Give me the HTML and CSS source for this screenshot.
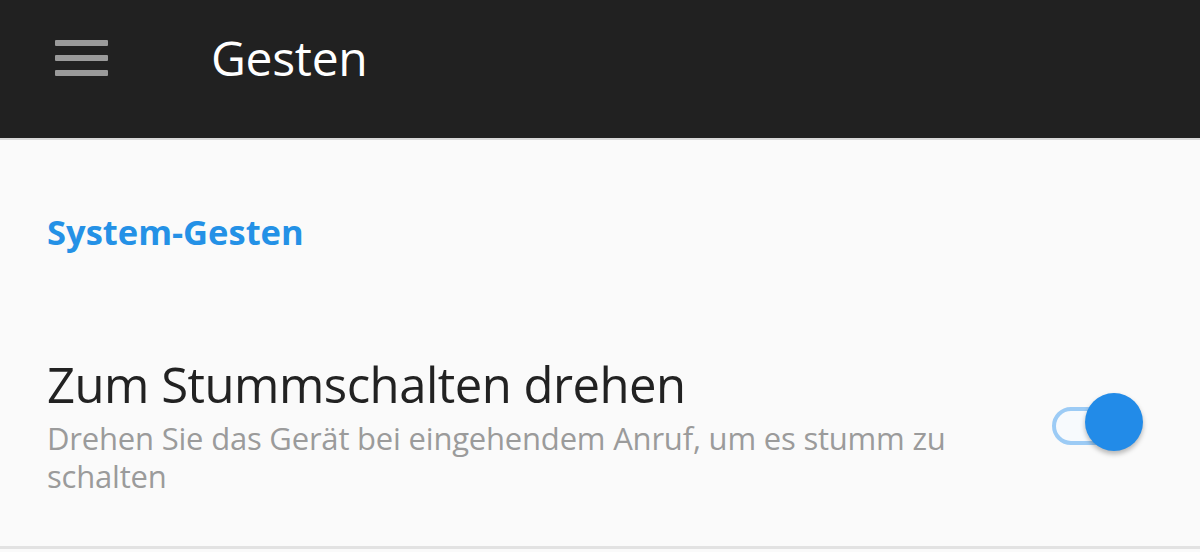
FILE: index.html
```html
<!DOCTYPE html>
<html lang="de">
<head>
<meta charset="utf-8">
<title>Gesten</title>
<link rel="stylesheet" href="styles.css">
</head>
<body>
<header class="appbar">
  <div class="menu" aria-label="Menü">
    <span class="bar"></span><span class="bar"></span><span class="bar"></span>
  </div>
  <h1 class="title">Gesten</h1>
</header>
<main class="content">
  <h2 class="section">System-Gesten</h2>
  <div class="item">
    <div class="texts">
      <div class="item-title">Zum Stummschalten drehen</div>
      <div class="item-sub">Drehen Sie das Gerät bei eingehendem Anruf, um es stumm zu schalten</div>
    </div>
    <div class="switch">
      <span class="track"></span>
      <span class="thumb"></span>
    </div>
  </div>
</main>
<div class="divider"></div>
</body>
</html>
```
FILE: styles.css
```css
html, body {
  margin: 0;
  padding: 0;
  background: #fafafa;
  font-family: "Open Sans", "Noto Sans", sans-serif;
}
.appbar {
  height: 138px;
  background: #212121;
  display: flex;
  align-items: flex-start;
  padding-left: 55px;
  border-bottom: 2px solid #d8d8d8;
  box-sizing: content-box;
}
.menu {
  width: 53px;
  display: flex;
  flex-direction: column;
  gap: 9px;
  margin-top: 40px;
}
.bar {
  display: block;
  height: 6px;
  background: #9a9a9a;
  border-radius: 1px;
}
.title {
  margin: 34px 0 0 103px;
  font-weight: 400;
  font-size: 48px;
  color: #ffffff;
  line-height: 1;
  letter-spacing: -0.3px;
}
.content {
  padding: 0 0 0 47px;
  height: 406px;
}
.section {
  margin: 0;
  padding-top: 72px;
  font-size: 34.5px;
  font-weight: 700;
  color: #2491e6;
  line-height: 40px;
  letter-spacing: 0;
}
.item {
  display: flex;
  align-items: flex-start;
  margin-top: 107px;
}
.texts {
  width: 920px;
}
.item-title {
  font-size: 49px;
  color: #222222;
  line-height: 50px;
  letter-spacing: -0.5px;
}
.item-sub {
  font-size: 31px;
  color: #9b9b9b;
  line-height: 38px;
  margin-top: 10px;
  letter-spacing: -0.2px;
}
.switch {
  position: relative;
  width: 96px;
  height: 60px;
  margin-left: 82px;
  margin-top: 33px;
}
.track {
  position: absolute;
  left: 3px;
  top: 15px;
  width: 66px;
  height: 38px;
  border: 4px solid #9ccbf5;
  border-radius: 19px;
  box-sizing: border-box;
  background: #f7fafd;
}
.thumb {
  position: absolute;
  left: 36px;
  top: 1px;
  width: 58px;
  height: 58px;
  border-radius: 50%;
  background: #228be8;
  box-shadow: 0 3px 5px rgba(0,0,0,0.28);
}
.divider {
  height: 3px;
  background: #e2e2e2;
}
```
